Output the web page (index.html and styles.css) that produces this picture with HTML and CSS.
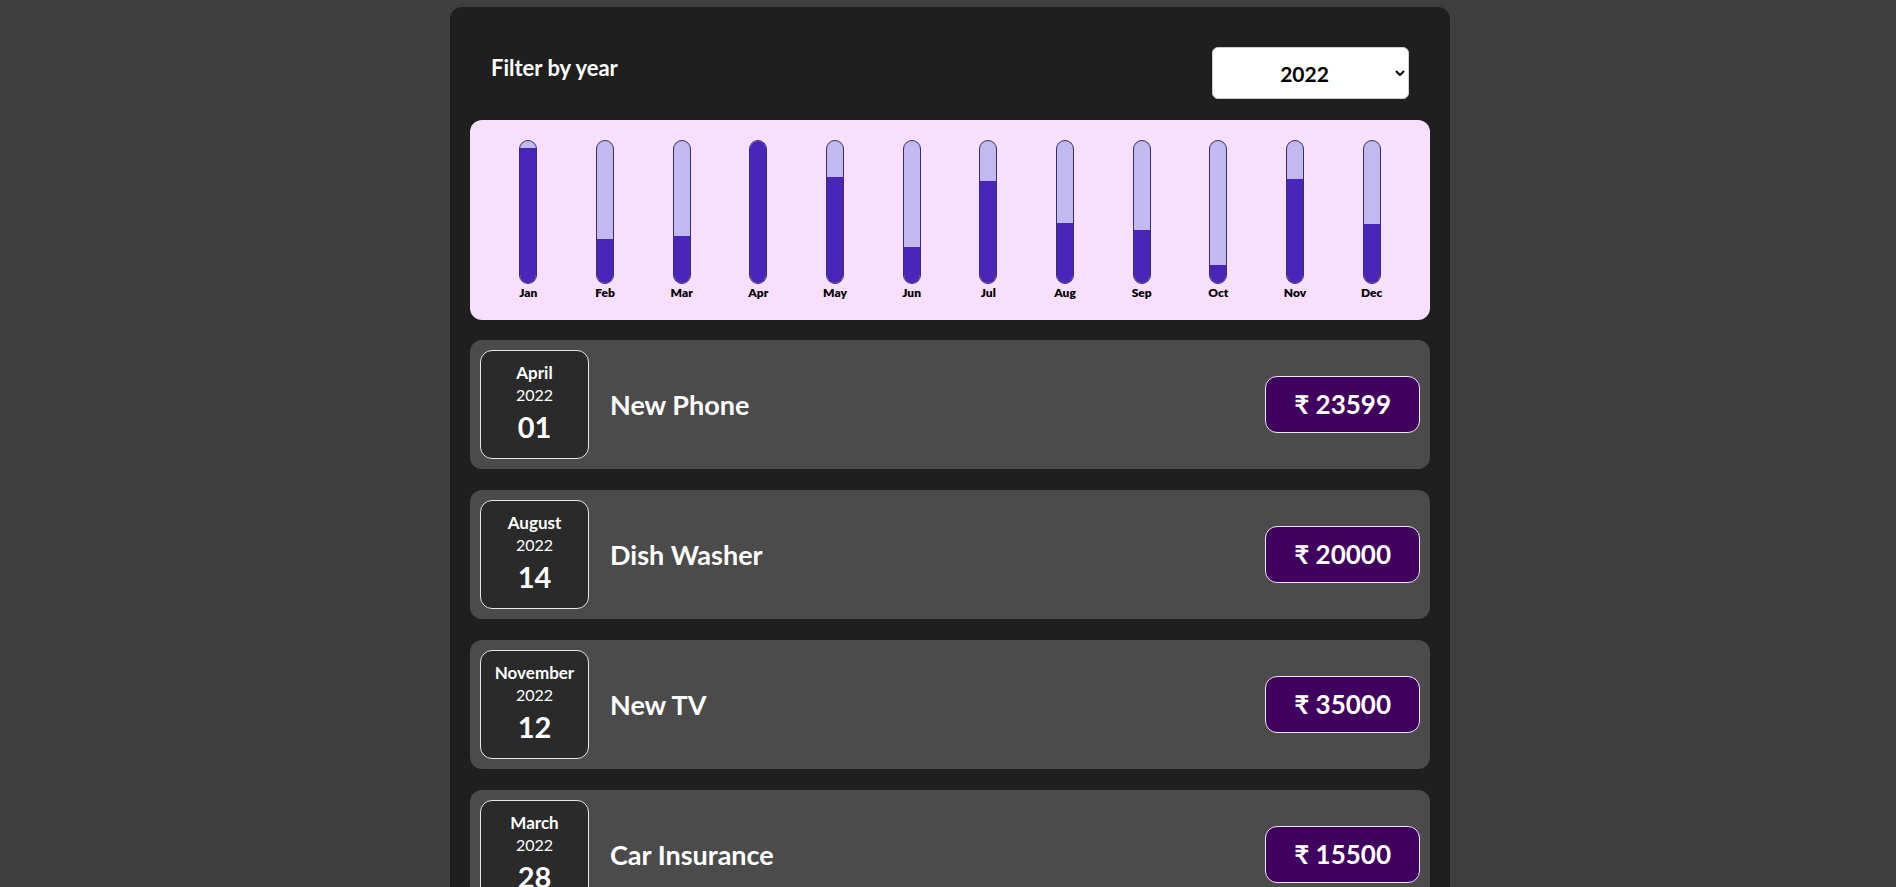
FILE: index.html
```html
<!DOCTYPE html>
<html lang="en">
<head>
<meta charset="utf-8">
<title>Expenses</title>
<link rel="stylesheet" href="styles.css">
</head>
<body>
<div class="card">
  <div class="filter">
    <label class="filter-label" for="year">Filter by year</label>
    <select id="year" class="filter-select">
      <option>2022</option>
      <option>2021</option>
      <option>2020</option>
      <option>2019</option>
    </select>
  </div>

  <div class="chart">
    <div class="chart-col"><div class="bar"><div class="bar-fill" style="height:95%"></div></div><span class="bar-label">Jan</span></div>
    <div class="chart-col"><div class="bar"><div class="bar-fill" style="height:31%"></div></div><span class="bar-label">Feb</span></div>
    <div class="chart-col"><div class="bar"><div class="bar-fill" style="height:33%"></div></div><span class="bar-label">Mar</span></div>
    <div class="chart-col"><div class="bar"><div class="bar-fill" style="height:100%"></div></div><span class="bar-label">Apr</span></div>
    <div class="chart-col"><div class="bar"><div class="bar-fill" style="height:74.5%"></div></div><span class="bar-label">May</span></div>
    <div class="chart-col"><div class="bar"><div class="bar-fill" style="height:25.5%"></div></div><span class="bar-label">Jun</span></div>
    <div class="chart-col"><div class="bar"><div class="bar-fill" style="height:72%"></div></div><span class="bar-label">Jul</span></div>
    <div class="chart-col"><div class="bar"><div class="bar-fill" style="height:42%"></div></div><span class="bar-label">Aug</span></div>
    <div class="chart-col"><div class="bar"><div class="bar-fill" style="height:37.5%"></div></div><span class="bar-label">Sep</span></div>
    <div class="chart-col"><div class="bar"><div class="bar-fill" style="height:12.5%"></div></div><span class="bar-label">Oct</span></div>
    <div class="chart-col"><div class="bar"><div class="bar-fill" style="height:73.5%"></div></div><span class="bar-label">Nov</span></div>
    <div class="chart-col"><div class="bar"><div class="bar-fill" style="height:41.5%"></div></div><span class="bar-label">Dec</span></div>
  </div>

  <ul class="expenses">
    <li class="expense">
      <div class="date"><span class="date-month">April</span><span class="date-year">2022</span><span class="date-day">01</span></div>
      <h2 class="expense-title">New Phone</h2>
      <div class="expense-price">₹ 23599</div>
    </li>
    <li class="expense">
      <div class="date"><span class="date-month">August</span><span class="date-year">2022</span><span class="date-day">14</span></div>
      <h2 class="expense-title">Dish Washer</h2>
      <div class="expense-price">₹ 20000</div>
    </li>
    <li class="expense">
      <div class="date"><span class="date-month">November</span><span class="date-year">2022</span><span class="date-day">12</span></div>
      <h2 class="expense-title">New TV</h2>
      <div class="expense-price">₹ 35000</div>
    </li>
    <li class="expense">
      <div class="date"><span class="date-month">March</span><span class="date-year">2022</span><span class="date-day">28</span></div>
      <h2 class="expense-title">Car Insurance</h2>
      <div class="expense-price">₹ 15500</div>
    </li>
  </ul>
</div>
</body>
</html>
```

FILE: styles.css
```css
* { box-sizing: border-box; }

html, body {
  background: #3f3f3f;
}

body {
  margin: 0;
  padding: 7px 0 40px 4px;
  font-family: Lato, "Noto Sans", "DejaVu Sans", sans-serif;
  color: #fff;
}

.card {
  width: 1000px;
  margin: 0 auto;
  padding: 0 20px 20px;
  background: #1f1f1f;
  border-radius: 12px;
}

.filter {
  display: flex;
  justify-content: space-between;
  align-items: flex-start;
  padding: 40px 21px 21px;
}

.filter-label {
  margin-top: 8px;
  font-size: 22px;
  font-weight: 700;
  line-height: 26px;
  color: #fff;
}

.filter-select {
  width: 197px;
  height: 52px;
  padding: 0 12px;
  font-family: Lato, "Noto Sans", sans-serif;
  font-size: 21px;
  font-weight: 700;
  color: #000;
  background: #fff;
  border: 1px solid #cfcfcf;
  border-radius: 6px;
  text-align: center;
}

.chart {
  display: grid;
  grid-template-columns: repeat(12, 1fr);
  padding: 20px 20px;
  height: 200px;
  background: #f8dffd;
  border-radius: 12px;
}

.chart-col {
  display: flex;
  flex-direction: column;
  align-items: center;
}

.bar {
  width: 18px;
  height: 144px;
  display: flex;
  flex-direction: column;
  justify-content: flex-end;
  background: #c3b9f1;
  border: 1px solid #3a2e5e;
  border-radius: 12px;
  overflow: hidden;
}

.bar-fill {
  background: #4826b9;
}

.bar-label {
  margin-top: 1px;
  font-size: 12px;
  font-weight: 800;
  line-height: 16px;
  color: #000;
}

.expenses {
  list-style: none;
  margin: 20px 0 0;
  padding: 0;
  display: flex;
  flex-direction: column;
  gap: 21px;
}

.expense {
  display: flex;
  align-items: center;
  gap: 21px;
  padding: 10px;
  background: #4b4b4b;
  border-radius: 12px;
}

.date {
  width: 109px;
  height: 109px;
  flex: none;
  display: flex;
  flex-direction: column;
  align-items: center;
  padding-top: 11px;
  background: #2a2a2a;
  border: 1px solid #e6e6e6;
  border-radius: 12px;
  color: #fff;
}

.date-month {
  font-size: 17px;
  font-weight: 700;
  line-height: 22px;
}

.date-year {
  font-size: 16px;
  font-weight: 400;
  line-height: 22px;
}

.date-day {
  margin-top: 4px;
  font-size: 29px;
  font-weight: 700;
  line-height: 34px;
}

.expense-title {
  flex: 1;
  margin: 0;
  font-size: 27px;
  font-weight: 700;
  color: #fff;
}

.expense-price {
  padding: 12px 28px;
  font-size: 26px;
  font-weight: 700;
  line-height: 31px;
  color: #fff;
  background: #40005e;
  border: 1px solid #f0e6f5;
  border-radius: 12px;
}
```
